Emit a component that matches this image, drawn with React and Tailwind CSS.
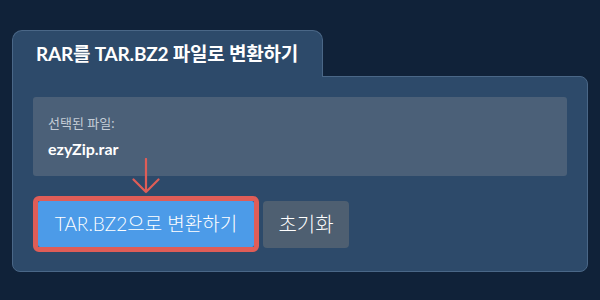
import React from "react";

export default function App() {
  const font = { fontFamily: "Lato, 'Noto Sans CJK KR', 'Noto Sans', sans-serif" };
  return (
    <div className="w-[600px] h-[300px] bg-[#102239] overflow-hidden" style={font}>
      <div className="pt-[30px] pl-[12px] w-[588px] flex flex-col">
        <div className="relative z-10 -mb-px w-[311px] h-[47px] bg-[#2d4a6a] border border-b-0 border-[#4a6787] rounded-t-[10px] flex items-center pl-[23px]">
          <span className="text-white font-bold text-[19px] tracking-[-0.2px]">RAR를 TAR.BZ2 파일로 변환하기</span>
        </div>
        <div className="relative bg-[#2d4a6a] border border-[#4a6787] rounded-tr-[8px] rounded-b-[8px] px-5 pt-5 pb-[19px]">
          <div className="h-[79px] bg-[#4b6078] rounded-[3px] px-[15px] pt-[17px]">
            <div className="text-[#c3ccd6] text-[13px] leading-[18px]">선택된 파일:</div>
            <div className="text-white font-bold text-[16px] leading-[22px] mt-[6px]">ezyZip.rar</div>
          </div>
          <div className="flex items-center gap-[4px] mt-[20px]">
            <div className="border-[5px] border-[#df5d57] rounded-[6px]">
              <button className="w-[216px] h-[46px] bg-[#4c9be8] text-white text-[19px] font-light rounded-[2px]">
                TAR.BZ2으로 변환하기
              </button>
            </div>
            <button className="w-[86px] h-[47px] bg-[#4e5f71] text-white text-[20px] font-light rounded-[4px]">
              초기화
            </button>
          </div>
          <svg className="absolute left-[119px] top-[81px]" width="28" height="36" viewBox="0 0 28 36" fill="none">
            <path d="M14 1 V34 M1.5 21.5 L14 34 L26.5 21.5" stroke="#df5d57" strokeWidth="2.2" strokeLinecap="round" strokeLinejoin="round" />
          </svg>
        </div>
      </div>
    </div>
  );
}
